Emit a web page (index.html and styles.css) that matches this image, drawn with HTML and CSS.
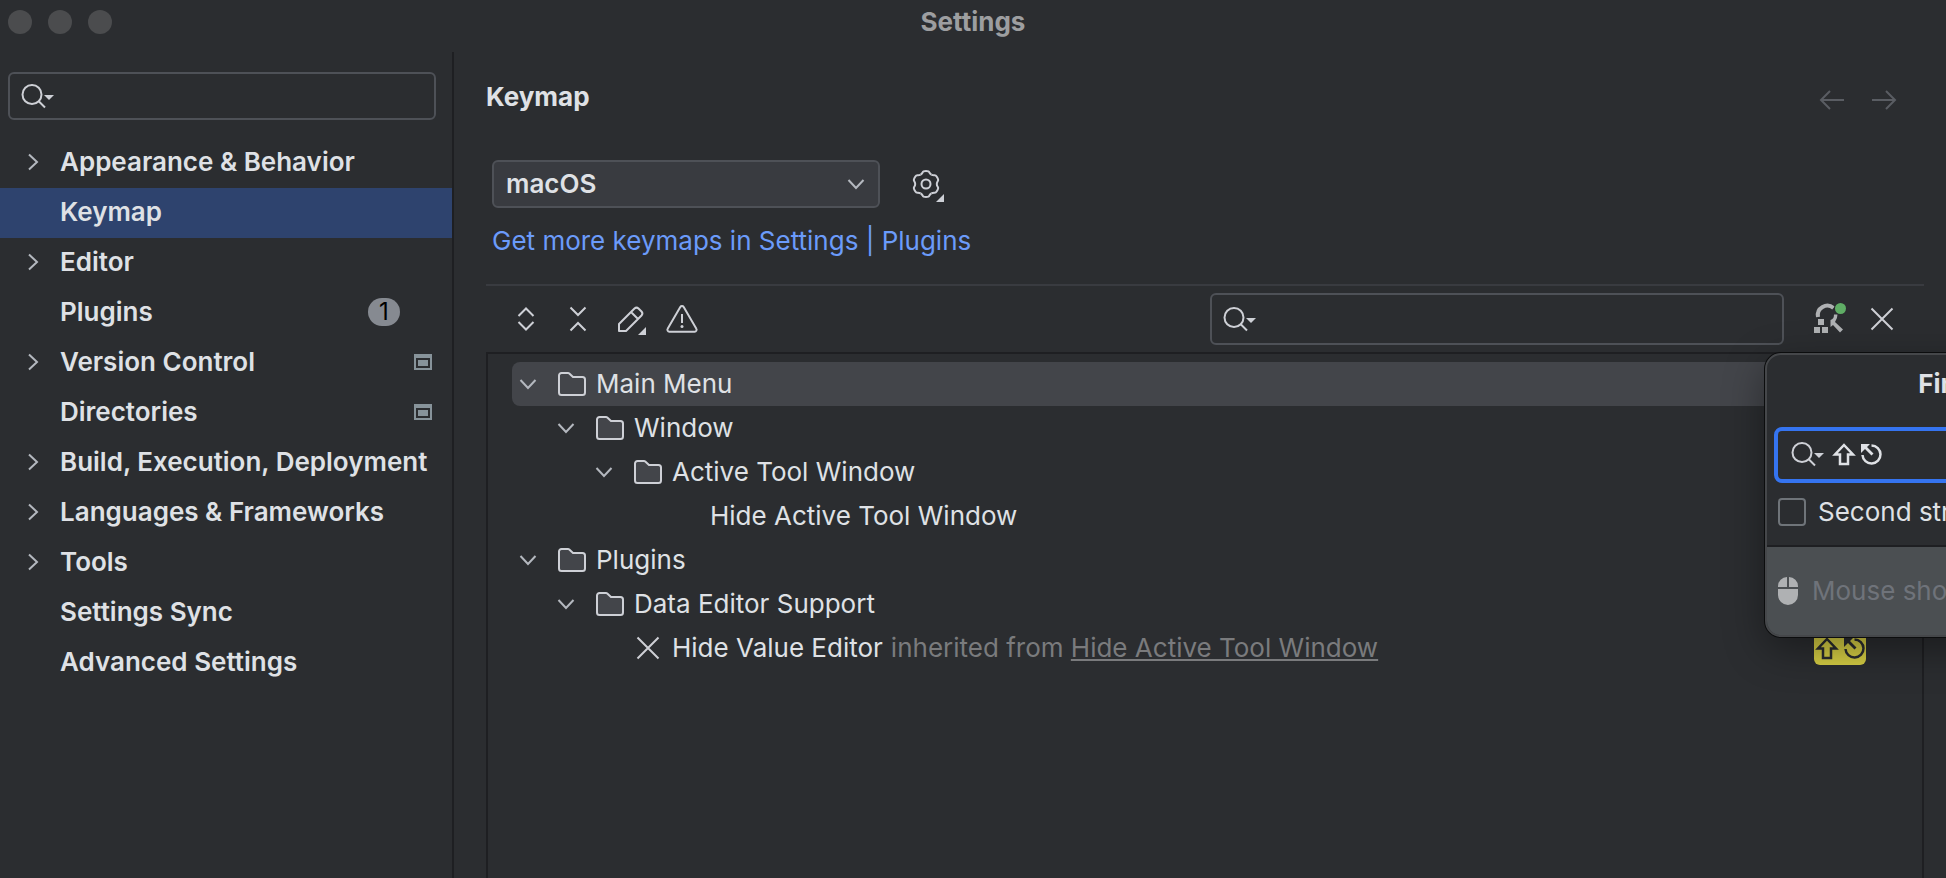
FILE: index.html
```html
<!DOCTYPE html>
<html lang="en">
<head>
<meta charset="utf-8">
<title>Settings</title>
<link rel="stylesheet" href="styles.css">
</head>
<body>
<svg class="defs" aria-hidden="true">
  <symbol id="right" viewBox="0 0 32 32"><path d="M11 8.500l8 7.500-8 7.500" fill="none" stroke="#b4b8bf" stroke-width="2"/></symbol>
  <symbol id="down" viewBox="0 0 32 32"><path d="M8.500 12l7.500 8 7.500-8" fill="none" stroke="#b4b8bf" stroke-width="2"/></symbol>
  <symbol id="folder" viewBox="0 0 32 32"><path d="M3 7.500A2.500 2.500 0 0 1 5.500 5H12a2 2 0 0 1 1.300.500L17 9h9.500A2.500 2.500 0 0 1 29 11.500v13a2.500 2.500 0 0 1-2.500 2.500h-21A2.500 2.500 0 0 1 3 24.500z" fill="#43454a" stroke="#ced0d6" stroke-width="2"/></symbol>
  <symbol id="close" viewBox="0 0 32 32"><path d="M5.500 5.500l21 21M26.500 5.500l-21 21" stroke="#ced0d6" stroke-width="2"/></symbol>
  <symbol id="search" viewBox="0 0 34 26"><circle cx="12" cy="11.500" r="9.500" fill="none" stroke="#ced0d6" stroke-width="2"/><path d="M18.500 18l6.500 6.500" stroke="#ced0d6" stroke-width="2"/><path d="M24 12h10l-5 5z" fill="#ced0d6"/></symbol>
  <symbol id="project" viewBox="0 0 18 16"><path d="M0 0h18v16H0zM2 4v10h14V4zM4 6h10v6H4z" fill="#87939a" fill-rule="evenodd"/></symbol>
  <symbol id="keys" viewBox="0 0 50 24"><path d="M12 3l9 9.500h-5V22H8v-9.500H3z" fill="none" stroke="currentColor" stroke-width="2.500"/><path d="M30.500 13a9 9 0 1 0 9-9.500" fill="none" stroke="currentColor" stroke-width="2.500"/><path d="M29 2h9l-3 3 6.500 6.500-2 2L33 7l-4 4z" fill="currentColor"/></symbol>
  <symbol id="lobe" viewBox="-16 -16 32 32"><path d="M-5.400-9.350C-3.300-10.550-3.500-12.200-2.500-12.600Q-1.500-13 0-13T2.500-12.600C3.500-12.200 3.300-10.550 5.400-9.350" fill="none" stroke="#ced0d6" stroke-width="2"/></symbol>
</svg>

<header class="titlebar">
  <div class="lights"><span></span><span></span><span></span></div>
  <h1>Settings</h1>
</header>

<div class="window">
  <aside class="sidebar">
    <div class="field sidebar-search">
      <svg class="search-icon"><use href="#search"/></svg>
      <input type="text" aria-label="Search settings">
    </div>
    <nav class="sections">
      <a href="#"><svg class="icon"><use href="#right"/></svg>Appearance &amp; Behavior</a>
      <a href="#" class="current"><i class="icon"></i>Keymap</a>
      <a href="#"><svg class="icon"><use href="#right"/></svg>Editor</a>
      <a href="#"><i class="icon"></i>Plugins<span class="count">1</span></a>
      <a href="#"><svg class="icon"><use href="#right"/></svg>Version Control<svg class="project"><use href="#project"/></svg></a>
      <a href="#"><i class="icon"></i>Directories<svg class="project"><use href="#project"/></svg></a>
      <a href="#"><svg class="icon"><use href="#right"/></svg>Build, Execution, Deployment</a>
      <a href="#"><svg class="icon"><use href="#right"/></svg>Languages &amp; Frameworks</a>
      <a href="#"><svg class="icon"><use href="#right"/></svg>Tools</a>
      <a href="#"><i class="icon"></i>Settings Sync</a>
      <a href="#"><i class="icon"></i>Advanced Settings</a>
    </nav>
  </aside>

  <main class="content">
    <div class="heading">
      <h2>Keymap</h2>
      <div class="history">
        <button type="button" aria-label="Back"><svg class="icon" viewBox="0 0 32 32"><path d="M28 16H5M14 7l-9 9 9 9" fill="none" stroke="#5a5d63" stroke-width="2"/></svg></button>
        <button type="button" aria-label="Forward"><svg class="icon" viewBox="0 0 32 32"><path d="M4 16h23M18 7l9 9-9 9" fill="none" stroke="#5a5d63" stroke-width="2"/></svg></button>
      </div>
    </div>

    <div class="scheme">
      <div class="combo">
        <select aria-label="Keymap scheme"><option>macOS</option></select>
        <svg class="icon"><use href="#down"/></svg>
      </div>
      <button type="button" aria-label="Scheme actions">
        <svg class="icon" viewBox="0 0 32 32">
          <g transform="translate(16 16)">
            <g id="gear-side"><use href="#lobe" x="-16" y="-16" width="32" height="32"/></g>
            <use href="#gear-side" transform="rotate(60)"/><use href="#gear-side" transform="rotate(120)"/><use href="#gear-side" transform="rotate(180)"/><use href="#gear-side" transform="rotate(240)"/><use href="#gear-side" transform="rotate(300)"/>
            <circle r="4.500" fill="none" stroke="#ced0d6" stroke-width="2"/>
          </g>
          <path d="M34 26v8h-8z" fill="#ced0d6"/>
        </svg>
      </button>
    </div>
    <a class="more" href="#">Get more keymaps in Settings | Plugins</a>

    <div class="toolbar">
      <button type="button" aria-label="Expand all"><svg class="icon" viewBox="0 0 32 32"><path d="M8.500 13l7.500-7.500 7.500 7.500M8.500 19l7.500 7.500 7.500-7.500" fill="none" stroke="#ced0d6" stroke-width="2"/></svg></button>
      <button type="button" aria-label="Collapse all"><svg class="icon" viewBox="0 0 32 32"><path d="M8.500 4.500l7.500 7.500 7.500-7.500M8.500 27.500l7.500-7.500 7.500 7.500" fill="none" stroke="#ced0d6" stroke-width="2"/></svg></button>
      <button type="button" aria-label="Edit shortcut"><svg class="icon" viewBox="0 0 32 32"><path d="M5 28v-7L20.500 5.500a3 3 0 0 1 4 0l3 3a3 3 0 0 1 0 4L12 28zM17 9l7 7" fill="none" stroke="#ced0d6" stroke-width="2" stroke-linejoin="round"/><path d="M32 24v8h-8z" fill="#ced0d6"/></svg></button>
      <button type="button" aria-label="Show conflicts"><svg class="icon" viewBox="0 0 32 32"><path d="M14.300 4a2 2 0 0 1 3.400 0l12.500 21.500a2 2 0 0 1-1.700 3.200H3.500a2 2 0 0 1-1.700-3.200z" fill="none" stroke="#ced0d6" stroke-width="2"/><path d="M16 11v9" stroke="#ced0d6" stroke-width="2"/><circle cx="16" cy="23.500" r="1.500" fill="#ced0d6"/></svg></button>
      <div class="field action-search">
        <svg class="search-icon"><use href="#search"/></svg>
        <input type="text" aria-label="Search actions by name">
      </div>
      <button type="button" aria-label="Find actions by shortcut"><svg class="icon" viewBox="0 0 32 32"><path d="M4 14a9.500 9.500 0 0 1 15.500-9" fill="none" stroke="#afb1b3" stroke-width="4"/><path d="M20 11.500h3.500q0 4-2.500 7.500l8 7.500-3 3-7-7.500-2.500 2V17Q20 16 20 11.500z" fill="#afb1b3"/><path d="M4 16h6v6H4zM0 24h6v6H0zM8 24h6v6H8z" fill="#afb1b3"/><circle cx="26.500" cy="5.500" r="6.500" fill="#2b2d30"/><circle cx="26.500" cy="5.500" r="5.500" fill="#5fad65"/></svg></button>
      <button type="button" aria-label="Clear filter"><svg class="icon"><use href="#close"/></svg></button>
    </div>

    <ul class="tree">
      <li class="selected"><svg class="icon"><use href="#down"/></svg><svg class="icon kind"><use href="#folder"/></svg>Main Menu</li>
      <li class="level-1"><svg class="icon"><use href="#down"/></svg><svg class="icon kind"><use href="#folder"/></svg>Window</li>
      <li class="level-2"><svg class="icon"><use href="#down"/></svg><svg class="icon kind"><use href="#folder"/></svg>Active Tool Window</li>
      <li class="level-3"><i class="icon"></i><i class="icon kind"></i>Hide Active Tool Window</li>
      <li><svg class="icon"><use href="#down"/></svg><svg class="icon kind"><use href="#folder"/></svg>Plugins</li>
      <li class="level-1"><svg class="icon"><use href="#down"/></svg><svg class="icon kind"><use href="#folder"/></svg>Data Editor Support</li>
      <li class="level-2"><i class="icon"></i><svg class="icon kind"><use href="#close"/></svg>Hide Value Editor<span class="inherited">inherited from <a href="#">Hide Active Tool Window</a></span><span class="shortcut"><svg class="keys"><use href="#keys"/></svg></span></li>
    </ul>
  </main>
</div>

<section class="popup" aria-label="Find Shortcut">
  <h3>Find Shortcut</h3>
  <div class="field shortcut-field">
    <svg class="search-icon"><use href="#search"/></svg>
    <svg class="keys"><use href="#keys"/></svg>
    <input type="text" aria-label="Shortcut">
  </div>
  <label class="second"><input type="checkbox">Second stroke</label>
  <div class="mouse">
    <svg class="mouse-icon" viewBox="0 0 20 28"><path d="M9 0v10H0V9a9 9 0 0 1 9-9zM11 0v10h9V9a9 9 0 0 0-9-9zM0 12h20v6a10 10 0 0 1-20 0z" fill="#afb1b3"/></svg>
    Mouse shortcut
  </div>
</section>
</body>
</html>
```
FILE: styles.css
```css
* { box-sizing: border-box; }

body {
  margin: 0;
  height: 100vh;
  display: flex;
  flex-direction: column;
  overflow: hidden;
  position: relative;
  background: #2b2d30;
  color: #dfe1e5;
  font: 26px/32px Inter, "Liberation Sans", sans-serif;
}

h1, h2, h3, ul { margin: 0; padding: 0; font-size: 26px; line-height: 32px; list-style: none; }
a { color: inherit; text-decoration: none; }
button { padding: 0; border: 0; background: none; display: flex; }
input[type="text"] { flex: 1; min-width: 0; border: 0; outline: 0; background: none; color: inherit; font: inherit; }

.defs { position: absolute; width: 0; height: 0; }
.icon { width: 32px; height: 32px; flex: none; display: block; overflow: visible; }
.search-icon { width: 34px; height: 26px; flex: none; }
.keys { width: 50px; height: 24px; flex: none; }

.titlebar { display: grid; grid-template-columns: 1fr auto 1fr; align-items: center; height: 52px; padding: 0 8px 8px; }
.titlebar h1 { color: #9d9ea0; }
.lights { display: flex; gap: 16px; }
.lights span { width: 24px; height: 24px; border-radius: 50%; background: #4b4c4e; }

.window { flex: 1; min-height: 0; display: flex; }

.sidebar { width: 454px; flex: none; border-right: 2px solid #1e1f22; padding-top: 20px; }
.field { display: flex; align-items: center; border: 2px solid #4e5157; border-radius: 6px; padding: 0 10px; }
.sidebar-search { height: 48px; margin: 0 16px 18px 8px; }
.sections a { display: flex; align-items: center; height: 50px; padding: 0 20px 2px 18px; font-weight: 600; white-space: nowrap; }
.sections .icon { margin-right: 10px; }
.sections .current { background: #2e436e; }
.count { margin-left: auto; margin-right: 32px; width: 32px; height: 28px; border-radius: 14px; background: #868a91; color: #000; font-size: 24px; line-height: 28px; font-weight: 400; text-align: center; }
.project { width: 18px; height: 16px; margin-left: auto; }

.content { flex: 1; min-width: 0; display: flex; flex-direction: column; padding: 29px 22px 0 32px; }
.heading { display: flex; justify-content: space-between; height: 79px; }
.history { display: flex; gap: 20px; padding: 3px 24px 0 0; }
.scheme { display: flex; align-items: center; gap: 30px; padding-left: 6px; }
.combo { position: relative; width: 388px; }
.combo select { appearance: none; width: 100%; height: 48px; padding: 0 12px; border: 2px solid #4e5157; border-radius: 6px; background: #393b40; color: inherit; font: inherit; font-weight: 600; }
.combo .icon { position: absolute; right: 8px; top: 8px; pointer-events: none; }
.more { align-self: flex-start; margin: 17px 6px 27px; color: #6b9bfa; }

.toolbar { display: flex; align-items: center; gap: 20px; height: 68px; padding: 0 26px 0 24px; border-top: 2px solid #393b40; }
.action-search { width: 574px; height: 52px; margin-left: auto; margin-right: 10px; }

.tree { flex: 1; border: 2px solid #1e1f22; border-bottom: 0; padding: 8px 8px 0 24px; }
.tree li { display: flex; align-items: center; height: 44px; border-radius: 8px; white-space: nowrap; }
.tree .selected { background: #43454a; }
.tree .level-1 { padding-left: 38px; }
.tree .level-2 { padding-left: 76px; }
.tree .level-3 { padding-left: 114px; }
.tree .kind { margin: 0 8px 0 12px; }
.inherited { margin-left: 8px; color: #7a7b7d; }
.inherited a { text-decoration: underline; }
.shortcut { margin-left: auto; margin-right: 48px; width: 52px; height: 34px; border-radius: 6px; background: #d6ce44; color: #2b2d30; display: flex; align-items: center; justify-content: center; }

.popup {
  position: absolute;
  left: 1765px;
  top: 353px;
  width: 478px;
  border: 2px solid #45474a;
  border-radius: 16px;
  overflow: hidden;
  background: #2b2d30;
  box-shadow: 0 0 0 1px #0c0d0e, 0 12px 40px rgba(0, 0, 0, .4);
}
.popup h3 { text-align: center; margin: 13px 0 27px; }
.shortcut-field { height: 56px; margin: 0 7px; border: 4px solid #3574f0; border-radius: 8px; padding: 0 12px 2px; gap: 8px; }
.second { display: flex; align-items: center; gap: 12px; height: 64px; padding: 0 11px 4px; border-bottom: 2px solid #1e1f22; white-space: nowrap; }
.second input { appearance: none; width: 28px; height: 28px; margin: 0; flex: none; border: 2px solid #6f7479; border-radius: 4px; }
.mouse { display: flex; align-items: center; gap: 14px; height: 88px; padding: 0 11px; background: #4b4f52; color: #6f737a; white-space: nowrap; }
.mouse-icon { width: 20px; height: 28px; flex: none; }
```
